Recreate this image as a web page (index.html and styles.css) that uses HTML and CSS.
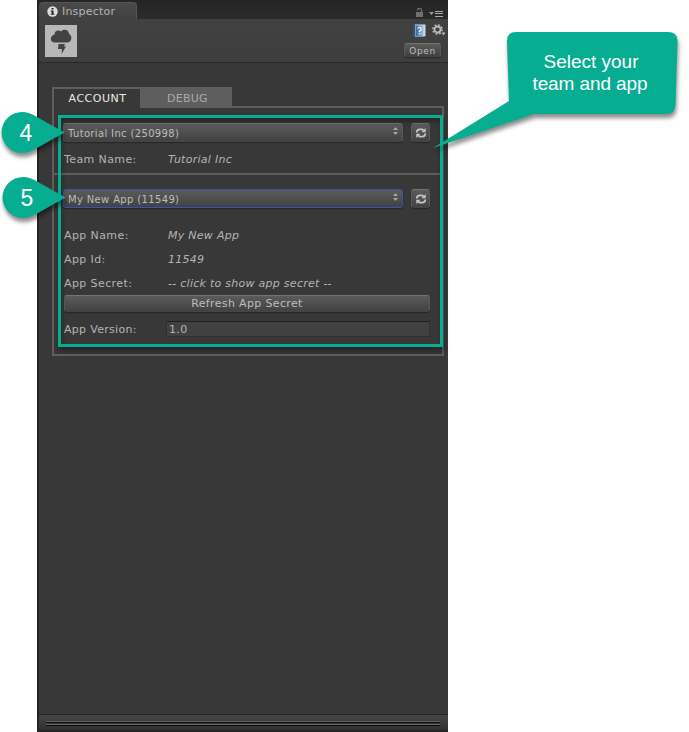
FILE: index.html
```html
<!DOCTYPE html>
<html lang="en">
<head>
<meta charset="utf-8">
<title>Inspector</title>
<link rel="stylesheet" href="styles.css">
</head>
<body>
<svg class="defs" width="0" height="0">
  <symbol id="refresh" viewBox="0 0 12 12">
    <path d="M1.800 5.500V4.800Q2.200 2.300 5 2.300H7.200L8.700 3.400M10.200 6.500V7.200Q9.800 9.700 7 9.700H4.800L3.300 8.600" fill="none" stroke="#c6c6c6" stroke-width="1.800"/>
    <path d="M10.700 1V5.200H6.500ZM1.300 11V6.800H5.500Z" fill="#c6c6c6"/>
  </symbol>
  <symbol id="updown" viewBox="0 0 5 13">
    <path d="M0 3 2.500 0 5 3ZM0 5H5L2.500 8Z" fill="#a5a5a5"/><path d="M2.500 8V13" stroke="#424242"/>
  </symbol>
</svg>
<main class="inspector">
  <div class="tabbar">
    <div class="window-tab">
      <svg width="11" height="11" viewBox="0 0 11 11"><circle cx="5.500" cy="5.500" r="5.200" fill="#dcdcdc"/><path d="M4.500 2H6.500V3.500H4.500ZM3.800 4.400H6.500V7.700H7.300V8.800H3.800V7.700H4.600V5.500H3.800Z" fill="#222"/></svg>
      <span>Inspector</span>
    </div>
    <div class="window-tools">
      <svg width="7" height="9" viewBox="0 0 7 9"><path d="M1.500 2.500V1.500Q1.500.6 2.500.6H4.500Q5.500.6 5.500 1.500V4" fill="none" stroke="#707070" stroke-width="1.200"/><path d="M0 4H7V9H0Z" fill="#707070"/></svg>
      <svg width="14" height="6" viewBox="0 0 14 6"><path d="M0 1H5L2.500 4Z" fill="#999"/><path d="M6 .500H14M6 2.500H14M6 5.500H14" stroke="#aaa"/></svg>
    </div>
  </div>
  <header class="header">
    <svg class="asset" width="32" height="32" viewBox="0 0 32 32"><path d="M0 0H32V32H0Z" fill="#b8b8b8"/><path d="M10 17.500C4.500 17.500 4.500 10.500 9.500 9.500C9.500 5 14 4.500 16 6.500C18 3.500 24 4 24 9C27.500 10 27.500 17.500 22 17.500Z" fill="#424242"/><path d="M13.500 19H20L19 21.500H21L16.500 29L17 24H13Z" fill="#424242"/></svg>
    <div class="header-tools">
      <div class="header-icons">
        <svg width="13" height="14" viewBox="0 0 13 14"><defs><linearGradient id="book"><stop stop-color="#365f91"/><stop offset="1" stop-color="#a6c5e4"/></linearGradient></defs><path d="M0 .500H12V13H0Z" fill="#2d527f"/><path d="M2 .500H12.500V12L11 12.500H2Z" fill="#c9d8e6"/><path d="M2.500 1.500H10.500V12H2.500Z" fill="url(#book)"/><path d="M4.800 4.500Q5 3.500 6.500 3.500Q8.200 3.500 8.200 5T6.500 7V8M6.500 9V10.300" fill="none" stroke="#fff" stroke-width="1.200"/></svg>
        <svg width="14" height="13" viewBox="0 0 14 13"><circle cx="5.500" cy="5.500" r="3" fill="none" stroke="#b8b8b8" stroke-width="1.800"/><circle cx="5.500" cy="5.500" r="4.500" fill="none" stroke="#b8b8b8" stroke-width="1.800" stroke-dasharray="1.767 1.767"/><path d="M9.500 8.500H13.500L11.500 11.500Z" fill="#b8b8b8"/></svg>
      </div>
      <button class="button open">Open</button>
    </div>
  </header>
  <section class="content">
    <nav class="tabs">
      <div class="tab active">ACCOUNT</div>
      <div class="tab">DEBUG</div>
    </nav>
    <div class="panel">
      <div class="pick">
        <div class="button select"><span>Tutorial Inc (250998)</span><svg width="5" height="13"><use href="#updown"/></svg></div>
        <div class="button square"><svg width="12" height="12"><use href="#refresh"/></svg></div>
      </div>
      <div class="field team"><span class="label">Team Name:</span><em>Tutorial Inc</em></div>
      <div class="divider"></div>
      <div class="pick">
        <div class="button select focused"><span>My New App (11549)</span><svg width="5" height="13"><use href="#updown"/></svg></div>
        <div class="button square"><svg width="12" height="12"><use href="#refresh"/></svg></div>
      </div>
      <div class="fields">
        <div class="field"><span class="label">App Name:</span><em>My New App</em></div>
        <div class="field"><span class="label">App Id:</span><em>11549</em></div>
        <div class="field"><span class="label">App Secret:</span><em>-- click to show app secret --</em></div>
      </div>
      <button class="button wide">Refresh App Secret</button>
      <div class="version"><span class="label">App Version:</span><div class="input">1.0</div></div>
    </div>
  </section>
  <footer class="footer"><div class="grip"></div></footer>
</main>
<div class="highlight"></div>
<svg class="callouts" width="689" height="732" viewBox="0 0 689 732">
  <g class="shape">
    <path d="M516 32H668Q678 32 677.500 42L675.500 105Q675 114 666 114H534L433 148L509 101L507 42Q506.500 32 516 32Z"/>
    <path d="M64.500 132.500L37 117Q29 112 22 112A20.500 20.500 0 0 0 22 153Q29 153 37 148Z"/>
    <path d="M65.500 197.500L38 182Q30 177 23 177A20.500 20.500 0 0 0 23 218Q30 218 38 213Z"/>
  </g>
  <g class="callout-text">
    <text x="26" y="141" class="number">4</text>
    <text x="27" y="206" class="number">5</text>
    <text x="591" y="68" textLength="95">Select your</text>
    <text x="590" y="90" textLength="115">team and app</text>
  </g>
</svg>
</body>
</html>
```
FILE: styles.css
```css
* { box-sizing: border-box; }
body { margin: 0; height: 732px; overflow: hidden; background: #fff; color: #b4b4b4; font: 11px/14px "DejaVu Sans", sans-serif; letter-spacing: .35px; }
.defs { position: absolute; }
svg { display: block; flex: none; }
.inspector { display: flex; flex-direction: column; width: 411px; height: 732px; margin-left: 37px; padding-left: 2px; border-bottom: 2px solid #252525; background: #383838; box-shadow: inset 2px 0 #242424; }
.tabbar { display: flex; justify-content: space-between; height: 19px; padding-top: 2px; background: linear-gradient(#252525, #2b2b2b); }
.window-tab { display: flex; align-items: center; gap: 4px; width: 98px; padding-left: 8px; border: 1px solid #555; border-width: 1px 1px 0 0; border-radius: 4px 4px 0 0; background: linear-gradient(#494949, #414141); }
.window-tab span { padding-top: 1px; letter-spacing: .2px; }
.window-tools { display: flex; align-items: center; gap: 6px; padding: 7px 5px 0 0; }
.window-tools svg:first-child { margin-top: -3px; }
.header { display: flex; justify-content: space-between; height: 44px; padding: 6px 7px 0 6px; border-bottom: 1px solid #282828; background: linear-gradient(#414141, #3e3e3e); }
.header-tools { display: flex; flex-direction: column; align-items: flex-end; gap: 5px; }
.header-icons { display: flex; gap: 6px; height: 14px; margin: -1px -5px 0 0; }
.button { display: flex; align-items: center; margin: 0; border: 1px solid #545454; border-color: #747474 #5a5a5a #454545; border-radius: 3px; background: linear-gradient(#5b5b5b, #424242); box-shadow: 0 1px 1px #262626; color: #bdbdbd; font: 11px/14px "DejaVu Sans", sans-serif; letter-spacing: .4px; }
.open { justify-content: center; width: 37px; height: 14px; padding: 1px 0 0; font-size: 9px; letter-spacing: .6px; }
.content { flex: 1; padding: 24px 4px 0 13px; }
.tabs { position: relative; display: flex; width: 180px; height: 21px; margin-bottom: -2px; }
.tab { flex: 1; padding-left: 3px; background: #5e5e5e; color: #aaa; text-align: center; line-height: 23px; letter-spacing: .25px; }
.tab.active { flex: 0 0 88px; padding-left: 1px; border: 2px solid #5e5e5e; border-width: 2px 0 0 2px; background: #383838; color: #e9e9e9; line-height: 19px; letter-spacing: .5px; }
.panel { height: 250px; padding: 15px 12px 0 10px; border: 2px solid #5e5e5e; background: #383838; }
.pick { display: flex; gap: 8px; height: 19px; margin-left: -1px; }
.select { flex: 1; justify-content: space-between; padding: 3px 4px 0 4px; font-size: 10px; letter-spacing: .35px; }
.select svg { margin-top: -1px; }
.focused { border-color: #3454b8; }
.square { justify-content: center; width: 19px; }
.field { display: flex; align-items: center; height: 24px; padding-top: 2px; }
.field em { letter-spacing: .27px; }
.team { margin-top: 5px; }
.label { width: 104px; letter-spacing: .4px; }
.divider { height: 2px; margin: 2px -12px 14px -10px; background: #5e5e5e; }
.fields { margin-top: 15px; }
.wide { justify-content: center; width: 100%; height: 17px; padding: 0; letter-spacing: .35px; }
.version { display: flex; align-items: center; height: 16px; margin-top: 9px; }
.version .label { padding-top: 2px; letter-spacing: .3px; }
.input { flex: 1; height: 16px; margin-left: -2px; padding: 1px 0 0 2px; border: 1px solid #303030; border-top-color: #202020; background: #414141; }
.footer { height: 16px; padding: 6px 8px 0 7px; border-top: 1px solid #282828; background: linear-gradient(#464646, #303030); }
.grip { height: 5px; background: linear-gradient(#666 1px, #0b0b0b 1px 2px, #383838 2px 3px, #666 3px 4px, #0b0b0b 4px); }
.highlight { position: absolute; left: 58px; top: 115px; width: 385px; height: 232px; border: 3px solid #07ad90; box-shadow: 1px 4px 5px rgba(0,0,0,.35), inset 1px 4px 5px rgba(0,0,0,.3); }
.callouts { position: absolute; left: 0; top: 0; }
.shape { fill: #07ad90; filter: drop-shadow(1px 4px 2px rgba(0,0,0,.45)); }
.callout-text { fill: #fff; font: 19px "Liberation Sans", sans-serif; letter-spacing: 0; text-anchor: middle; }
.number { font-size: 23px; }
```
